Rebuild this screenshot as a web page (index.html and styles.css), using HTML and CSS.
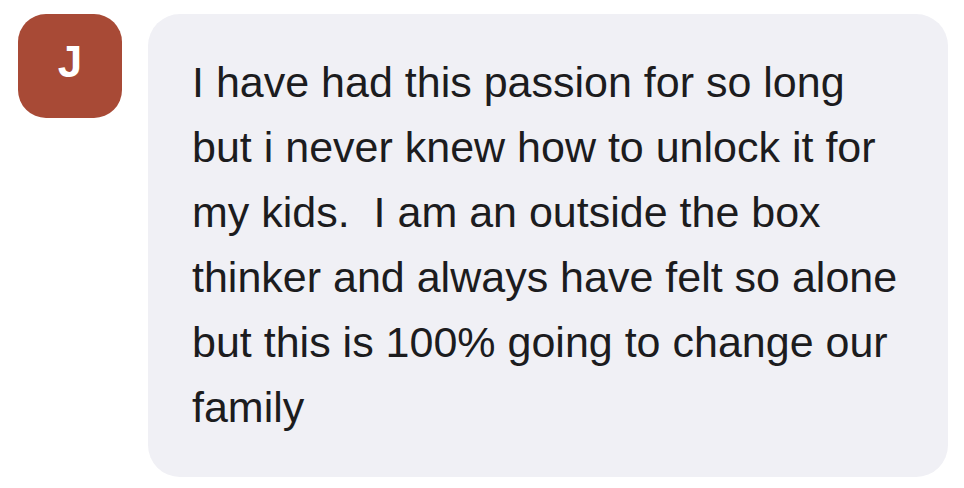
FILE: index.html
```html
<!DOCTYPE html>
<html>
<head>
<meta charset="utf-8">
<link rel="stylesheet" href="styles.css">
</head>
<body>
<div class="row">
  <div class="avatar">J</div>
  <div class="bubble">
    <p class="msg">I have had this passion for so long<br>but i never knew how to unlock it for<br>my kids.&nbsp; I am an outside the box<br>thinker and always have felt so alone<br>but this is 100% going to change our<br>family</p>
  </div>
</div>
</body>
</html>
```
FILE: styles.css
```css
html, body {
  margin: 0;
  padding: 0;
  background: #ffffff;
}
.row {
  display: flex;
  align-items: flex-start;
  gap: 26px;
  padding: 14px 0 0 18px;
}
.avatar {
  width: 104px;
  height: 104px;
  box-sizing: border-box;
  padding-bottom: 8px;
  flex: none;
  border-radius: 28px;
  background: #a84a36;
  color: #ffffff;
  font-family: "Liberation Sans", Arial, sans-serif;
  font-weight: bold;
  font-size: 44px;
  display: flex;
  align-items: center;
  justify-content: center;
}
.bubble {
  width: 800px;
  box-sizing: border-box;
  height: 463px;
  padding: 36px 0 0 44px;
  background: #f0f0f5;
  border-radius: 32px;
}
.msg {
  margin: 0;
  font-family: "Liberation Sans", Arial, sans-serif;
  font-size: 43px;
  line-height: 65px;
  color: #1c1c1e;
  white-space: nowrap;
}
```
